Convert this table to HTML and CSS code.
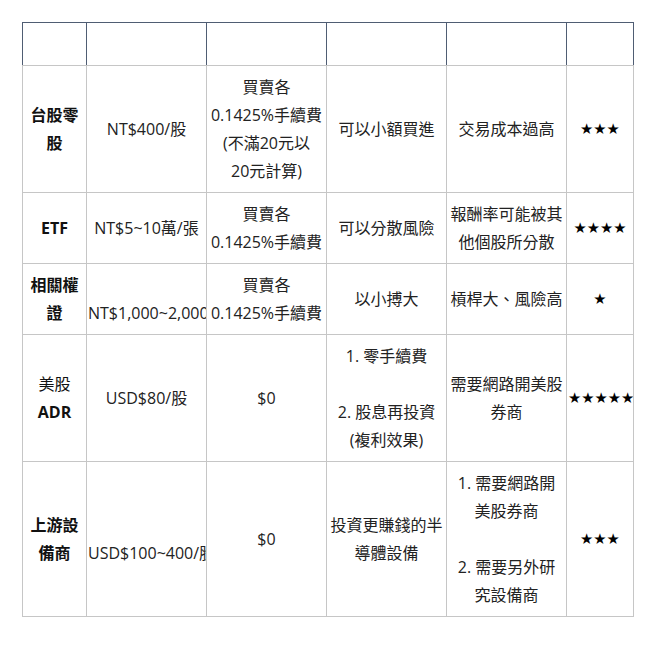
FILE: index.html
```html
<!DOCTYPE html>
<html lang="zh-Hant">
<head>
<meta charset="utf-8">
<title>投資比較</title>
<link rel="stylesheet" href="styles.css">
</head>
<body>
<div class="wrap">
<table class="cmp">
  <colgroup>
    <col class="c1"><col class="c2"><col class="c3"><col class="c4"><col class="c5"><col class="c6">
  </colgroup>
  <thead>
    <tr><th>&nbsp;</th><th>&nbsp;</th><th>&nbsp;</th><th>&nbsp;</th><th>&nbsp;</th><th>&nbsp;</th></tr>
  </thead>
  <tbody>
    <tr>
      <td class="name">台股零<br>股</td>
      <td>NT$400/股</td>
      <td>買賣各<br>0.1425%手續費<br>(不滿20元以<br>20元計算)</td>
      <td>可以小額買進</td>
      <td>交易成本過高</td>
      <td class="stars">★★★</td>
    </tr>
    <tr>
      <td class="name">ETF</td>
      <td>NT$5~10萬/張</td>
      <td>買賣各<br>0.1425%手續費</td>
      <td>可以分散風險</td>
      <td>報酬率可能被其<br>他個股所分散</td>
      <td class="stars">★★★★</td>
    </tr>
    <tr>
      <td class="name">相關權<br>證</td>
      <td class="clip"><div>&nbsp;</div><div class="over">NT$1,000~2,000/張</div></td>
      <td>買賣各<br>0.1425%手續費</td>
      <td>以小搏大</td>
      <td>槓桿大、風險高</td>
      <td class="stars">★</td>
    </tr>
    <tr>
      <td class="name"><span class="reg">美股</span><br>ADR</td>
      <td>USD$80/股</td>
      <td>$0</td>
      <td>1. 零手續費<br><br>2. 股息再投資<br>(複利效果)</td>
      <td>需要網路開美股<br>券商</td>
      <td class="stars">★★★★★</td>
    </tr>
    <tr>
      <td class="name">上游設<br>備商</td>
      <td class="clip"><div>&nbsp;</div><div class="over">USD$100~400/股</div></td>
      <td>$0</td>
      <td>投資更賺錢的半<br>導體設備</td>
      <td>1. 需要網路開<br>美股券商<br><br>2. 需要另外研<br>究設備商</td>
      <td class="stars">★★★</td>
    </tr>
  </tbody>
</table>
</div>
</body>
</html>
```

FILE: styles.css
```css
html, body {
  margin: 0;
  padding: 0;
  background: #ffffff;
}

.wrap {
  padding: 22px 0 0 22px;
}

.cmp {
  border-collapse: collapse;
  table-layout: fixed;
  width: 611px;
  font-family: "Open Sans", "Noto Sans CJK TC", sans-serif;
  font-size: 16px;
  line-height: 28px;
  color: #222222;
}

.c1 { width: 64px; }
.c2 { width: 120px; }
.c3 { width: 120px; }
.c4 { width: 120px; }
.c5 { width: 120px; }
.c6 { width: 67px; }

.cmp th {
  border: 1px solid #4f5d73;
  border-bottom-color: #c6c6c6;
  padding: 7px 1px;
  font-weight: normal;
}

.cmp td {
  border: 1px solid #c6c6c6;
  padding: 7px 1px;
  text-align: center;
  vertical-align: middle;
  overflow: hidden;
  white-space: nowrap;
}

.cmp td.name {
  font-weight: bold;
  color: #111111;
}

.reg {
  font-weight: normal;
}

.cmp td.stars {
  font-family: "DejaVu Sans", sans-serif;
  font-size: 14.8px;
  color: #000000;
  letter-spacing: 0;
}

.clip .over {
  text-align: left;
  white-space: nowrap;
}
```
